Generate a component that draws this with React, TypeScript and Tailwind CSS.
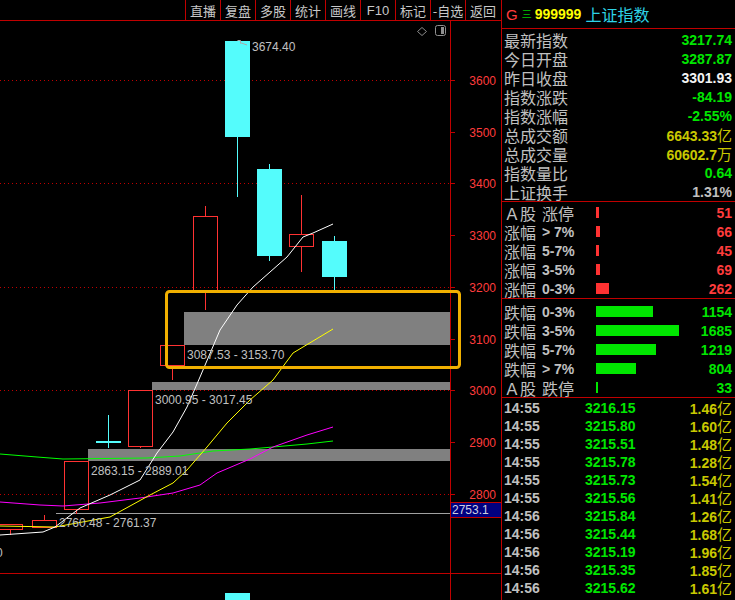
import React from "react";

const CN = "font-['Noto_Sans_CJK_SC',sans-serif]";
const NUM = "font-['Liberation_Sans','Noto_Sans_CJK_SC',sans-serif]";

const RED = "#ff3232";
const CYAN = "#54fcfc";

type Candle = {x: number; top: number; bottom: number; hi: number; lo: number; up: boolean};

const candles: Candle[] = [
	{x: -2, top: 524, bottom: 529, hi: 524, lo: 535, up: true},
	{x: 32, top: 520, bottom: 527, hi: 515, lo: 527, up: true},
	{x: 64, top: 461, bottom: 509, hi: 461, lo: 514, up: true},
	{x: 96, top: 441, bottom: 443, hi: 415, lo: 448, up: false},
	{x: 128, top: 390, bottom: 446, hi: 390, lo: 448, up: true},
	{x: 160, top: 345, bottom: 365, hi: 345, lo: 380, up: true},
	{x: 193, top: 216, bottom: 290, hi: 206, lo: 310, up: true},
	{x: 225, top: 41, bottom: 137, hi: 41, lo: 197, up: false},
	{x: 257, top: 169, bottom: 256, hi: 164, lo: 261, up: false},
	{x: 289, top: 234, bottom: 246, hi: 195, lo: 272, up: true},
	{x: 322, top: 241, bottom: 277, hi: 236, lo: 293, up: false},
];

const ma = {
	white: "0,535 43,532 55,527 80,508 110,495 140,480 157,453 173,432 187,407 200,377 220,330 237,305 253,287 287,257 303,237 313,233 333,224",
	yellow: "0,526 55,527 110,517 150,495 173,483 187,470 207,447 227,423 250,400 273,380 293,353 333,329",
	magenta: "0,502 40,505 63,506 100,503 140,498 173,493 200,485 217,473 250,459 273,447 307,435 333,427",
	green: "0,454 37,457 63,459 147,458 180,456 213,451 250,449 273,447 307,444 333,441",
};

const zones = [
	{x: 184, y: 312, h: 33, label: "3087.53 - 3153.70", lx: 187, ly: 359},
	{x: 152, y: 382, h: 8, label: "3000.95 - 3017.45", lx: 155, ly: 404},
	{x: 88, y: 449, h: 12, label: "2863.15 - 2889.01", lx: 91, ly: 475},
];

const axis = [
	{v: "3600", y: 80},
	{v: "3500", y: 132},
	{v: "3400", y: 183},
	{v: "3300", y: 235},
	{v: "3200", y: 287},
	{v: "3100", y: 339},
	{v: "3000", y: 390},
	{v: "2900", y: 442},
	{v: "2800", y: 494},
];

const tools = ["直播", "复盘", "多股", "统计", "画线", "F10", "标记", "-自选", "返回"];

const info = [
	{label: "最新指数", value: "3217.74", color: "text-[#00e600]"},
	{label: "今日开盘", value: "3287.87", color: "text-[#00e600]"},
	{label: "昨日收盘", value: "3301.93", color: "text-[#f4f4f4]"},
	{label: "指数涨跌", value: "-84.19", color: "text-[#00e600]"},
	{label: "指数涨幅", value: "-2.55%", color: "text-[#00e600]"},
	{label: "总成交额", value: "6643.33", unit: "亿", color: "text-[#c8c800]"},
	{label: "总成交量", value: "60602.7", unit: "万", color: "text-[#c8c800]"},
	{label: "指数量比", value: "0.64", color: "text-[#00e600]"},
	{label: "上证换手", value: "1.31%", color: "text-[#c0c0c0]"},
];

const ups = [
	{a: "Ａ股", b: "涨停", v: 51},
	{a: "涨幅", b: "> 7%", v: 66},
	{a: "涨幅", b: "5-7%", v: 45},
	{a: "涨幅", b: "3-5%", v: 69},
	{a: "涨幅", b: "0-3%", v: 262},
];

const downs = [
	{a: "跌幅", b: "0-3%", v: 1154},
	{a: "跌幅", b: "3-5%", v: 1685},
	{a: "跌幅", b: "5-7%", v: 1219},
	{a: "跌幅", b: "> 7%", v: 804},
	{a: "Ａ股", b: "跌停", v: 33},
];

const ticks = [
	["14:55", "3216.15", "1.46"],
	["14:55", "3215.80", "1.60"],
	["14:55", "3215.51", "1.48"],
	["14:55", "3215.78", "1.28"],
	["14:55", "3215.73", "1.54"],
	["14:55", "3215.56", "1.41"],
	["14:56", "3215.84", "1.26"],
	["14:56", "3215.44", "1.68"],
	["14:56", "3215.19", "1.96"],
	["14:56", "3215.35", "1.85"],
	["14:56", "3215.62", "1.61"],
];

const barWidth = (v: number) => Math.max(1, Math.round(v / 20.5 + 0.4));

const Chart = () => (
	<svg
		width={501}
		height={579}
		viewBox="0 21 501 579"
		className={`block ${NUM}`}
	>
		{axis
			.filter((_, i) => i % 2 === 0)
			.map((a) => (
				<line
					key={a.v}
					x1={0}
					x2={450}
					y1={a.y + 0.5}
					y2={a.y + 0.5}
					stroke="#c00000"
					strokeDasharray="1 3"
				/>
			))}

		{zones.map((z) => (
			<rect key={z.label} x={z.x} y={z.y} width={450 - z.x} height={z.h} fill="#808080" />
		))}
		<line x1={56} x2={450} y1={513.5} y2={513.5} stroke="#a0a0a0" />

		{candles.map((c, i) => {
			const cx = c.x + 12.5;
			const color = c.up ? RED : CYAN;
			return (
				<g key={i}>
					{c.hi < c.top && (
						<line x1={cx} x2={cx} y1={c.hi} y2={c.top} stroke={color} />
					)}
					{c.lo > c.bottom && (
						<line x1={cx} x2={cx} y1={c.bottom} y2={c.lo} stroke={color} />
					)}
					{c.up ? (
						<rect
							x={c.x + 0.5}
							y={c.top + 0.5}
							width={24}
							height={c.bottom - c.top}
							fill="none"
							stroke={RED}
						/>
					) : (
						<rect x={c.x} y={c.top} width={25} height={c.bottom - c.top} fill={CYAN} />
					)}
				</g>
			);
		})}

		<polyline points={ma.green} fill="none" stroke="#00ff00" />
		<polyline points={ma.magenta} fill="none" stroke="#ff00ff" />
		<polyline points={ma.yellow} fill="none" stroke="#ffff00" />
		<polyline points={ma.white} fill="none" stroke="#ffffff" />

		<g fill="#c0c0c0" fontSize={12}>
			{zones.map((z) => (
				<text key={z.label} x={z.lx} y={z.ly}>
					{z.label}
				</text>
			))}
			<text x={59} y={527}>
				2760.48 - 2761.37
			</text>
			<text x={252} y={51}>
				3674.40
			</text>
			<text x={-4} y={557}>
				0
			</text>
		</g>
		<path d="M237.5 40.5 h3 v3 M240 42.5 L247 45" stroke="#a8a8a8" fill="none" />

		<rect x={225} y={593} width={25} height={7} fill={CYAN} />

		<line x1={0} x2={501} y1={573.5} y2={573.5} stroke="#c00000" />
		<line x1={450.5} x2={450.5} y1={21} y2={600} stroke="#c00000" />
		{axis.map((a) => (
			<g key={a.v}>
				<line x1={450} x2={455} y1={a.y + 0.5} y2={a.y + 0.5} stroke="#c00000" />
				<text x={496} y={a.y + 5} fontSize={12} fill="#ff3c3c" textAnchor="end">
					{a.v}
				</text>
			</g>
		))}

		<rect x={451} y={502} width={50} height={16} fill="#000080" />
		<line x1={451} x2={501} y1={502.5} y2={502.5} stroke="#c00000" />
		<line x1={451} x2={501} y1={517.5} y2={517.5} stroke="#c00000" />
		<text x={452} y={514} fontSize={12} fill="#d0d0e0">
			2753.1
		</text>

		<polygon points="422,27.5 426.5,31.5 422,35.5 417.5,31.5" fill="none" stroke="#8a8a8a" />
		<rect x={435.5} y={25.5} width={10} height={10} rx={2} fill="none" stroke="#909090" />
		<rect x={441} y={27} width={3} height={7} fill="#909090" />

		<rect
			x={166.5}
			y={291.5}
			width={293}
			height={76}
			rx={3}
			fill="none"
			stroke="#f0b000"
			strokeWidth={3}
		/>
	</svg>
);

const Unit = ({children}: {children: React.ReactNode}) => (
	<span className={`${CN} font-normal text-[15px] leading-none`}>{children}</span>
);

const BreadthRow = ({a, b, v, up}: {a: string; b: string; v: number; up: boolean}) => {
	const label = b.match(/^[\u4e00-\u9fff]/) ? (
		<span className={CN}>{b}</span>
	) : (
		<span className={`${NUM} font-bold text-[14px]`}>{b}</span>
	);
	return (
		<div className="flex items-center h-[19px]">
			<div className="w-[92px] flex items-center gap-[6px] text-[16px] text-[#c0c0c0] leading-none whitespace-nowrap">
				<span className={CN}>{a}</span>
				{label}
			</div>
			<div className="flex-1">
				<div
					className={`h-[11px] ${up ? "bg-[#ff3232]" : "bg-[#00e600]"}`}
					style={{width: barWidth(v)}}
				/>
			</div>
			<span
				className={`${NUM} font-bold text-[14px] leading-none ${
					up ? "text-[#ff3c3c]" : "text-[#00e600]"
				}`}
			>
				{v}
			</span>
		</div>
	);
};

export default function App() {
	return (
		<div className="flex w-[735px] h-[600px] bg-black overflow-hidden select-none">
			<div className="w-[501px] flex flex-col shrink-0">
				<div className="h-[21px] border-b border-[#c00000] flex justify-end pr-[1px]">
					{tools.map((t) => (
						<div
							key={t}
							className={`w-[35px] h-[20px] border-l border-[#c00000] flex items-center justify-center text-[13px] text-[#c8c8c8] leading-none whitespace-nowrap ${
								t === "F10" ? NUM : CN
							}`}
						>
							{t}
						</div>
					))}
				</div>
				<Chart />
			</div>

			<div className="flex-1 border-l border-[#c00000] flex flex-col">
				<div className="h-[29px] border-b border-[#c00000] flex items-center pl-[4px] leading-none">
					<span className={`${NUM} text-[15px] text-[#ff3c3c]`}>G</span>
					<span className={`${CN} text-[10px] text-[#00c800] ml-[4px]`}>三</span>
					<span className={`${NUM} font-bold text-[14px] text-[#ffff00] ml-[3px]`}>999999</span>
					<span className={`${CN} text-[16px] text-[#2ed3e6] ml-[4px]`}>上证指数</span>
				</div>

				<div className="pt-[1px] border-b border-[#c00000] pl-[2px] pr-[3px]">
					{info.map((r) => (
						<div key={r.label} className="flex items-center justify-between h-[19px]">
							<span className={`${CN} text-[16px] text-[#c0c0c0] leading-none`}>
								{r.label}
							</span>
							<span className={`${NUM} font-bold text-[14px] leading-none ${r.color}`}>
								{r.value}
								{r.unit && <Unit>{r.unit}</Unit>}
							</span>
						</div>
					))}
				</div>

				<div className="pt-[1px] border-b border-[#c00000] pl-[2px] pr-[3px]">
					{ups.map((r) => (
						<BreadthRow key={r.a + r.b} {...r} up />
					))}
				</div>

				<div className="pt-[3px] border-b border-[#c00000] pl-[2px] pr-[3px]">
					{downs.map((r) => (
						<BreadthRow key={r.a + r.b} {...r} up={false} />
					))}
				</div>

				<div className="pt-[1px] pl-[2px] pr-[3px]">
					{ticks.map((t, i) => (
						<div
							key={i}
							className={`flex items-center h-[18px] ${NUM} font-bold text-[14px] leading-none`}
						>
							<span className="w-[81px] text-[#c0c0c0]">{t[0]}</span>
							<span className="text-[#00e600]">{t[1]}</span>
							<span className="flex-1 text-right text-[#c8c800]">
								{t[2]}
								<Unit>亿</Unit>
							</span>
						</div>
					))}
				</div>
			</div>
		</div>
	);
}
